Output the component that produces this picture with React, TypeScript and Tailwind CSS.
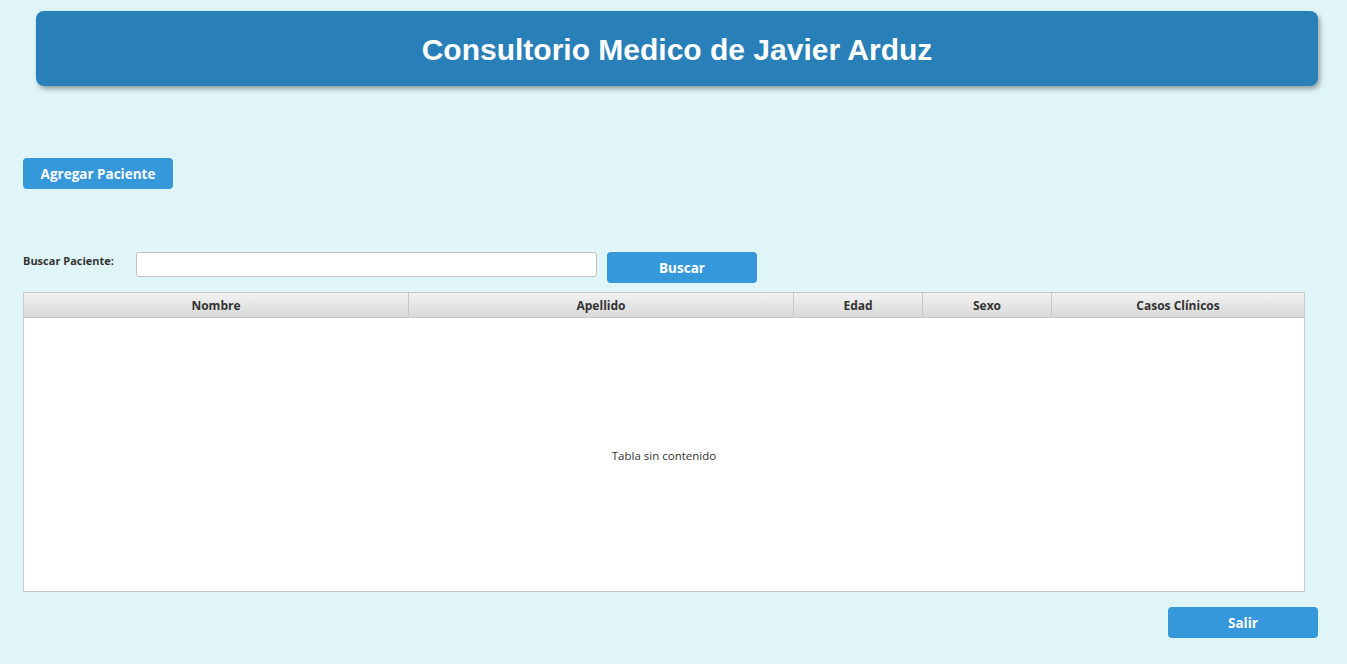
export default function App() {
  const cols = [
    { label: "Nombre", w: "w-[385px]" },
    { label: "Apellido", w: "w-[385px]" },
    { label: "Edad", w: "w-[129px]" },
    { label: "Sexo", w: "w-[129px]" },
    { label: "Casos Clínicos", w: "flex-1" },
  ];

  return (
    <main className="min-h-screen w-full bg-[#dff5f8] pt-[11px] font-['Open_Sans',sans-serif]">
      {/* encabezado */}
      <header className="ml-[36px] w-[1282px] h-[75px] rounded-lg bg-[#2980b9] shadow-[2px_3px_5px_rgba(0,0,0,0.35)] flex items-center justify-center">
        <h1 className="text-[30px] font-bold text-white font-['Liberation_Sans',Arial,sans-serif] pt-[1px]">
          Consultorio Medico de Javier Arduz
        </h1>
      </header>

      <div className="pl-[23px]">
        <button className="mt-[72px] w-[150px] h-[31px] pt-[1px] rounded bg-[#3498db] text-white text-[13.5px] font-bold">
          Agregar Paciente
        </button>

        <div className="mt-[63px] flex items-start h-[31px]">
          <span className="w-[113px] pt-[1px] text-[11px] font-bold text-[#333]">Buscar Paciente:</span>
          <input
            type="text"
            className="w-[461px] h-[25px] rounded-[3px] border border-[#c2c2c2] bg-white outline-none"
          />
          <button className="ml-[10px] w-[150px] h-[31px] pt-[1px] rounded bg-[#3498db] text-white text-[13.5px] font-bold">
            Buscar
          </button>
        </div>

        <section className="mt-[9px] w-[1282px] h-[300px] border border-[#c8c8c8] bg-white flex flex-col">
          <div className="flex h-[25px] border-b border-[#c8c8c8] bg-gradient-to-b from-[#f2f2f2] to-[#d9d9d9]">
            {cols.map((c, i) => (
              <div
                key={c.label}
                className={`${c.w} flex items-center justify-center pt-[2px] text-[12px] font-bold text-[#333] ${
                  i < cols.length - 1 ? "border-r border-[#c8c8c8]" : ""
                }`}
              >
                {c.label}
              </div>
            ))}
          </div>
          <div className="flex-1 flex items-center justify-center text-[11.5px] text-[#333] pt-[3px]">
            Tabla sin contenido
          </div>
        </section>

        <div className="w-[1295px] flex justify-end mt-[15px]">
          <button className="w-[150px] h-[31px] pt-[1px] rounded bg-[#3498db] text-white text-[13.5px] font-bold">
            Salir
          </button>
        </div>
      </div>
    </main>
  );
}
